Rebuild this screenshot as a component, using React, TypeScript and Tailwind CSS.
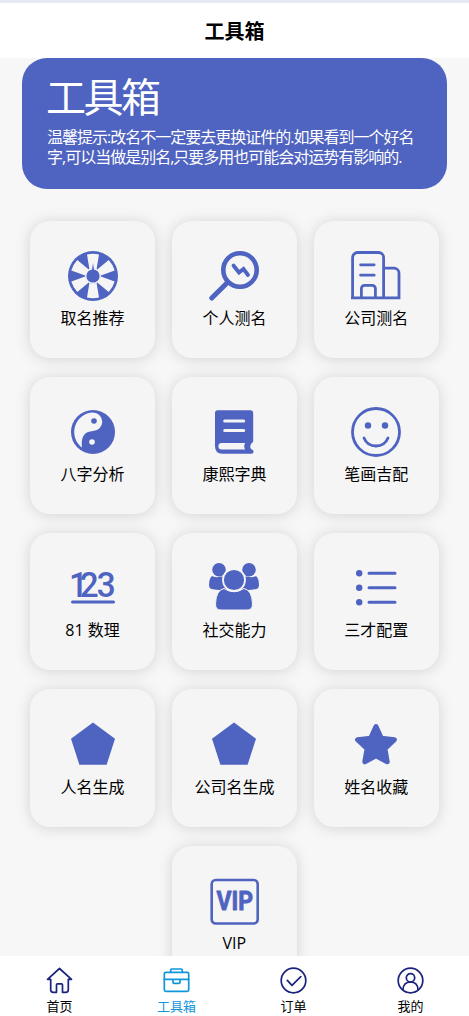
import type { ReactNode } from "react";

const tools: { label: string; icon: ReactNode }[] = [
  {
    label: "取名推荐",
    icon: (
      <svg className="size-[50px]" viewBox="0 0 50 50">
        <circle cx="25" cy="25" r="25" fill="#4f63c0" />
        {[0, 60, 120, 180, 240, 300].map((angle) => (
          <path
            key={angle}
            d="M19 3.4Q25 2 31 3.4L28.6 18Q25 17 21.4 18Z"
            fill="#f5f5f5"
            transform={`rotate(${angle} 25 25)`}
          />
        ))}
        <circle cx="25" cy="25" r="8" fill="#f5f5f5" />
        <circle cx="25" cy="25" r="6.6" fill="#4f63c0" />
        <path d="M25 12l1.2 8h-2.4z" fill="#4f63c0" />
      </svg>
    ),
  },
  {
    label: "个人测名",
    icon: (
      <svg
        className="size-[50px]"
        viewBox="0 0 50 50"
        fill="none"
        stroke="#4f63c0"
      >
        <circle cx="31" cy="19" r="16.7" strokeWidth="4.6" />
        <path d="M18.5 31.5L2.8 47" strokeWidth="5" strokeLinecap="round" />
        <path
          d="M24.5 14.5l5.5 7L34.5 18l4.5 6"
          strokeWidth="3.8"
          strokeLinecap="round"
        />
      </svg>
    ),
  },
  {
    label: "公司测名",
    icon: (
      <svg
        className="size-[50px]"
        viewBox="0 0 50 50"
        fill="none"
        stroke="#4f63c0"
        strokeWidth="2.8"
      >
        <path d="M1.6 46.6V6.5a5 5 0 0 1 5-5h21a5 5 0 0 1 5 5v40.1" />
        <path d="M32.6 17.2H43a5 5 0 0 1 5 5v24.4M0 46.8h49.4" />
        <path d="M10.4 46.6v-9a3.2 3.2 0 0 1 3.2-3.2h7.6a3.2 3.2 0 0 1 3.2 3.2v9" />
        <path d="M9.6 13.8h13.6M9.6 24.2h13.6" strokeLinecap="round" />
      </svg>
    ),
  },
  {
    label: "八字分析",
    icon: (
      <svg className="size-[50px]" viewBox="0 0 50 50">
        <circle cx="25" cy="25" r="22" fill="#4f63c0" />
        <path
          d="M25 5.5A19.5 19.5 0 0 0 14 40.6Q12 24.6 25 24A9.2 9.2 0 0 0 25 5.5Z"
          fill="#f5f5f5"
        />
        <circle cx="26" cy="14" r="2.8" fill="#4f63c0" />
        <circle cx="24" cy="35" r="2.8" fill="#f5f5f5" />
      </svg>
    ),
  },
  {
    label: "康熙字典",
    icon: (
      <svg className="size-[50px]" viewBox="-0.7 0 50 50">
        <path
          d="M8 3.3h32.5a3 3 0 0 1 3 3V34a2 2 0 0 1-1.5 2q-3 4.3 0 6.5a2 2 0 0 1-.5 4.2H12.5Q5.3 46.7 5.3 39V6a2.7 2.7 0 0 1 2.7-2.7Z"
          fill="#4f63c0"
        />
        <path
          d="M12 36h23.5q-2 3.3 0 6.6H12a3.3 3.3 0 0 1 0-6.6Z"
          fill="#f5f5f5"
        />
        <path
          d="M15 14h19M15 23.5h19"
          stroke="#f5f5f5"
          strokeWidth="3"
          strokeLinecap="round"
        />
      </svg>
    ),
  },
  {
    label: "笔画吉配",
    icon: (
      <svg
        className="size-[50px]"
        viewBox="0 0 50 50"
        fill="none"
        stroke="#4f63c0"
        strokeWidth="2.8"
      >
        <circle cx="25" cy="25" r="23.5" />
        <path d="M13 31a13 13 0 0 0 24 0" strokeLinecap="round" />
        <circle cx="17" cy="18.5" r="3.2" fill="#4f63c0" stroke="none" />
        <circle cx="34" cy="18.5" r="3.2" fill="#4f63c0" stroke="none" />
      </svg>
    ),
  },
  {
    label: "81 数理",
    icon: (
      <svg className="size-[50px]" viewBox="0 0 50 50" fill="#4f63c0">
        <text
          x="1 12.5 30.4"
          y="34"
          transform="scale(0.95 1)"
          className="font-['Roboto','Open_Sans',sans-serif] text-[35px] font-medium"
        >
          123
        </text>
        <path
          d="M4.5 39h41"
          stroke="#4f63c0"
          strokeWidth="3"
          strokeLinecap="round"
        />
      </svg>
    ),
  },
  {
    label: "社交能力",
    icon: (
      <svg className="size-[50px]" viewBox="0 0 50 50" fill="#4f63c0">
        <circle cx="10" cy="6.8" r="6.8" />
        <circle cx="40" cy="6.8" r="6.8" />
        <path d="M3 13Q6 15 12 13.5q2 0 3 .5-2 8 4.5 12.5-4.5 0-7 .4-5 .1-10-1Q0 25 0 22.5q0-7 3-9.5Z" />
        <path d="M47 13Q44 15 38 13.5q-2 0-3 .5 2 8-4.5 12.5 4.5 0 7 .4 5 .1 10-1Q50 25 50 22.5q0-7-3-9.5Z" />
        <path
          d="M15 25.5Q25 32 35 25.5 43 27 43.5 41 43.6 47 38 47H12Q6.4 47 6.5 41 7 27 15 25.5Z"
          stroke="#f5f5f5"
          strokeWidth="1"
        />
        <circle cx="25" cy="17" r="11" stroke="#f5f5f5" strokeWidth="1.8" />
      </svg>
    ),
  },
  {
    label: "三才配置",
    icon: (
      <svg
        className="size-[50px]"
        viewBox="0 0 50 50"
        fill="#4f63c0"
        stroke="#4f63c0"
        strokeWidth="3"
        strokeLinecap="round"
      >
        <path d="M18 10.3h26M18 24.8h26M18 39.3h26" />
        <circle cx="8.2" cy="10.3" r="3.2" stroke="none" />
        <circle cx="8.2" cy="24.8" r="3.2" stroke="none" />
        <circle cx="8.2" cy="39.3" r="3.2" stroke="none" />
      </svg>
    ),
  },
  { label: "人名生成", icon: <Pentagon /> },
  { label: "公司名生成", icon: <Pentagon /> },
  {
    label: "姓名收藏",
    icon: (
      <svg className="size-[50px]" viewBox="0 0 50 50">
        <path
          d="M25 7.5l5.4 11.7 13 1.6-9.5 9 2.3 13L25 36.8 13.8 42.8l2.3-13-9.5-9 13-1.6z"
          fill="#4f63c0"
          stroke="#4f63c0"
          strokeWidth="5"
          strokeLinejoin="round"
        />
      </svg>
    ),
  },
  {
    label: "VIP",
    icon: (
      <svg
        className="size-[50px]"
        viewBox="0 0 50 50"
        fill="none"
        stroke="#4f63c0"
      >
        <rect x="2.7" y="4" width="46" height="43.5" rx="4" strokeWidth="2.6" />
        <text
          x="7.5"
          y="34.4"
          textLength="36.5"
          lengthAdjust="spacingAndGlyphs"
          fill="#4f63c0"
          strokeWidth="0.8"
          strokeLinejoin="round"
          className="font-['Roboto','Open_Sans',sans-serif] text-[25px] font-bold"
        >
          VIP
        </text>
      </svg>
    ),
  },
];

const tabs: { label: string; active?: boolean; icon: ReactNode }[] = [
  {
    label: "首页",
    icon: (
      <path d="M13.5 1.5L1.5 12.3h3.2v10.5q0 2.5 2.5 2.5h3.3v-7.5q0-1 1-1h4q1 0 1 1v7.5h3.3q2.5 0 2.5-2.5V12.3h3.2Z" />
    ),
  },
  {
    label: "工具箱",
    active: true,
    icon: (
      <>
        <rect x="1.3" y="5.3" width="24.4" height="19" rx="1.5" />
        <path d="M7.7 5.3V3.2q0-1.2 1.2-1.2h9.2q1.2 0 1.2 1.2v2.1M1.3 12.3h24.4M10 12.5v2.8q0 1 1 1h5q1 0 1-1v-2.8" />
      </>
    ),
  },
  {
    label: "订单",
    icon: (
      <>
        <circle cx="13.5" cy="13.5" r="12.3" />
        <path d="M7.3 13.3l4.7 5 8.8-8.6" />
      </>
    ),
  },
  {
    label: "我的",
    icon: (
      <>
        <circle cx="13.5" cy="13.5" r="12.3" />
        <circle cx="13.5" cy="10.8" r="4.2" />
        <path d="M6 22.5q.5-7.5 7.5-7.5t7.5 7.5" />
      </>
    ),
  },
];

function Pentagon() {
  return (
    <svg className="size-[50px]" viewBox="0 0 50 50">
      <path d="M25 3.5l22 16.2L38.6 45.8H11.4L3 19.7z" fill="#4f63c0" />
    </svg>
  );
}

function App() {
  return (
    <div className="flex h-screen flex-col overflow-hidden bg-[#f7f7f7] font-['Open_Sans','Noto_Sans_CJK_SC',sans-serif] text-black">
      <header className="flex h-[58px] shrink-0 items-center justify-center border-t-[3px] border-[#e6eaf2] bg-white pt-[2px]">
        <h1 className="text-xl leading-7 font-bold">工具箱</h1>
      </header>

      <main className="min-h-0 flex-1 overflow-hidden">
        <section className="mx-[22px] h-[131px] rounded-[25px] bg-[#4f63c0] px-[25px] pt-[15px] text-white">
          <h2 className="-ml-px text-[40px] leading-[48px] tracking-[-2.5px]">
            工具箱
          </h2>
          <p className="mt-[6px] text-base leading-5 tracking-[-1px]">
            温馨提示:改名不一定要去更换证件的.如果看到一个好名
            <br />
            字,可以当做是别名,只要多用也可能会对运势有影响的.
          </p>
        </section>

        <section className="mt-[31.8px] flex flex-wrap justify-center gap-x-[16.85px] gap-y-[19px] pr-[29.2px] pl-[29px]">
          {tools.map((tool) => (
            <div
              key={tool.label}
              className="flex h-[137.2px] w-[125px] flex-col items-center rounded-[20px] bg-[#f5f5f5] pt-[30px] shadow-[0_1px_15px_rgba(0,0,0,0.15)]"
            >
              {tool.icon}
              <span className="mt-[6.15px] text-base leading-[22px] whitespace-nowrap">
                {tool.label}
              </span>
            </div>
          ))}
        </section>
      </main>

      <nav className="z-10 grid h-[60px] shrink-0 grid-cols-4 bg-white pl-px">
        {tabs.map((tab) => (
          <div
            key={tab.label}
            className={`flex flex-col items-center pt-[11px] ${tab.active ? "text-[#1296db]" : "text-black"}`}
          >
            <svg
              className={`size-[27px] ${tab.active ? "stroke-[#1296db]" : "stroke-[#1a237e]"}`}
              viewBox="0 0 27 27"
              fill="none"
              strokeWidth="1.7"
              strokeLinejoin="round"
              strokeLinecap="round"
            >
              {tab.icon}
            </svg>
            <span className="mt-[3px] text-[13px] leading-[18px]">
              {tab.label}
            </span>
          </div>
        ))}
      </nav>
    </div>
  );
}

export default App;
